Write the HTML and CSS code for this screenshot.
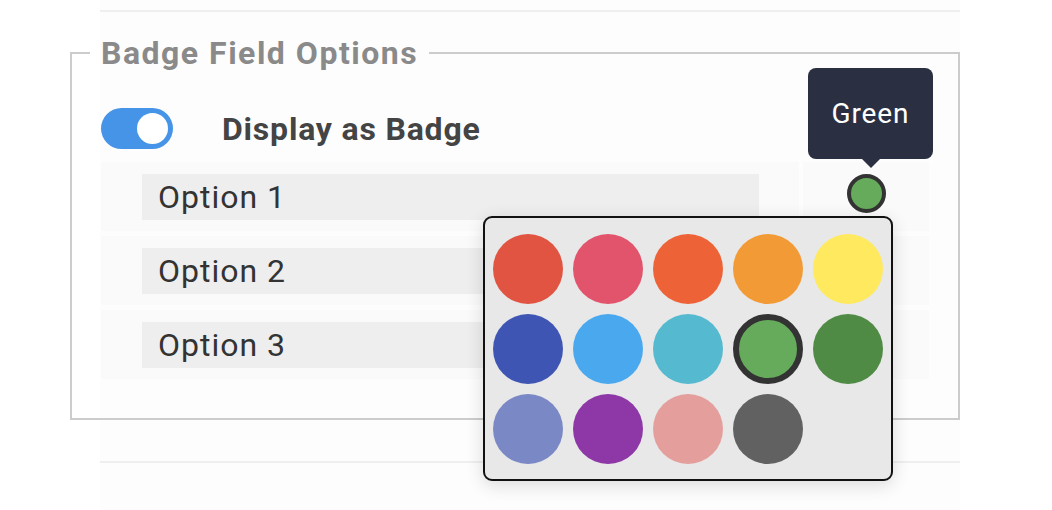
FILE: index.html
```html
<!DOCTYPE html>
<html>
<head>
<meta charset="utf-8">
<link rel="stylesheet" href="styles.css">
</head>
<body>
<div class="page">
  <div class="divider"></div>
  <fieldset class="group">
    <legend class="group-title">Badge Field Options</legend>
    <div class="switch-row">
      <span class="switch on"><span class="knob"></span></span>
      <span class="switch-label">Display as Badge</span>
    </div>
    <div class="options">
      <div class="option-row">
        <div class="option-main"><div class="option-input">Option 1</div></div>
        <div class="option-color"><span class="dot selected"></span></div>
      </div>
      <div class="option-row">
        <div class="option-main"><div class="option-input">Option 2</div></div>
        <div class="option-color"></div>
      </div>
      <div class="option-row">
        <div class="option-main"><div class="option-input">Option 3</div></div>
        <div class="option-color"></div>
      </div>
    </div>
  </fieldset>
  <div class="divider lower"></div>

  <div class="tooltip">Green</div>

  <div class="palette">
    <span class="swatch c-red"></span>
    <span class="swatch c-pink"></span>
    <span class="swatch c-deeporange"></span>
    <span class="swatch c-orange"></span>
    <span class="swatch c-yellow"></span>
    <span class="swatch c-indigo"></span>
    <span class="swatch c-blue"></span>
    <span class="swatch c-cyan"></span>
    <span class="swatch c-green active"></span>
    <span class="swatch c-darkgreen"></span>
    <span class="swatch c-lavender"></span>
    <span class="swatch c-purple"></span>
    <span class="swatch c-rose"></span>
    <span class="swatch c-gray"></span>
  </div>
</div>
</body>
</html>
```

FILE: styles.css
```css
html, body {
  margin: 0;
  padding: 0;
  background: #ffffff;
  overflow: hidden;
}

body {
  font-family: Roboto, "Liberation Sans", sans-serif;
  width: 1052px;
  height: 510px;
}

.page {
  position: relative;
  box-sizing: border-box;
  margin-left: 100px;
  padding-top: 10px;
  width: 860px;
  height: 510px;
  background: #fdfdfd;
}

.divider {
  height: 2px;
  background: #efefef;
}

.divider.lower {
  margin-top: 41px;
}

.group {
  margin: 23px 0 0 -30px;
  padding: 0 29px 39px 29px;
  border: 2px solid #cccccc;
  min-width: 0;
}

.group-title {
  margin-left: -11px;
  padding: 0 11px;
  font-size: 32px;
  line-height: 36px;
  font-weight: 700;
  color: #8a8a8a;
  letter-spacing: 1.5px;
}

.switch-row {
  display: flex;
  align-items: center;
  gap: 49px;
  margin-top: 37px;
  height: 41px;
}

.switch {
  position: relative;
  display: block;
  width: 72px;
  height: 41px;
  border-radius: 21px;
  background: #4594e8;
  flex: none;
}

.switch .knob {
  position: absolute;
  top: 5px;
  right: 5px;
  width: 31px;
  height: 31px;
  border-radius: 50%;
  background: #ffffff;
}

.switch-label {
  font-size: 32px;
  font-weight: 700;
  color: #444444;
  letter-spacing: 0.8px;
}

.options {
  margin-top: 13px;
  display: flex;
  flex-direction: column;
  gap: 5px;
}

.option-row {
  display: grid;
  grid-template-columns: 1fr 126px;
  gap: 4px;
  height: 69px;
}

.option-main {
  background: #fafafa;
  padding: 12px 40px 11px 41px;
}

.option-input {
  height: 46px;
  background: #eeeeee;
  padding-left: 16px;
  font-size: 32px;
  line-height: 46px;
  color: #333333;
  letter-spacing: 1px;
}

.option-color {
  background: #fafafa;
  display: flex;
  justify-content: center;
  padding-top: 12px;
}

.dot {
  display: block;
  width: 31px;
  height: 31px;
  border-radius: 50%;
  border: 4px solid #333333;
  background: #66ab5c;
}

.tooltip {
  position: absolute;
  left: 708px;
  top: 68px;
  width: 125px;
  height: 91px;
  box-sizing: border-box;
  border-radius: 8px;
  background: #2a3042;
  color: #ffffff;
  font-size: 28px;
  line-height: 91px;
  text-align: center;
  letter-spacing: 0.9px;
}

.tooltip::after {
  content: "";
  position: absolute;
  left: 50%;
  bottom: -9px;
  margin-left: -9px;
  border-left: 9px solid transparent;
  border-right: 9px solid transparent;
  border-top: 9px solid #2a3042;
}

.palette {
  position: absolute;
  left: 383px;
  top: 216px;
  display: grid;
  grid-template-columns: repeat(5, 70px);
  grid-auto-rows: 70px;
  gap: 10px;
  padding: 16px 8px 15px 8px;
  border: 2px solid #111111;
  border-radius: 9px;
  background: #e8e8e8;
  box-shadow: 0 4px 18px rgba(0, 0, 0, 0.14);
}

.swatch {
  display: block;
  width: 70px;
  height: 70px;
  border-radius: 50%;
  box-sizing: border-box;
}

.swatch.active {
  border: 6px solid #333333;
}

.c-red { background: #e05441; }
.c-pink { background: #e2546c; }
.c-deeporange { background: #ed6337; }
.c-orange { background: #f29b36; }
.c-yellow { background: #ffe95f; }
.c-indigo { background: #3f55b3; }
.c-blue { background: #4aa9ee; }
.c-cyan { background: #55bad0; }
.c-green { background: #66ab5c; }
.c-darkgreen { background: #4f8b45; }
.c-lavender { background: #7b88c6; }
.c-purple { background: #8e38a7; }
.c-rose { background: #e49f9d; }
.c-gray { background: #616161; }
```
